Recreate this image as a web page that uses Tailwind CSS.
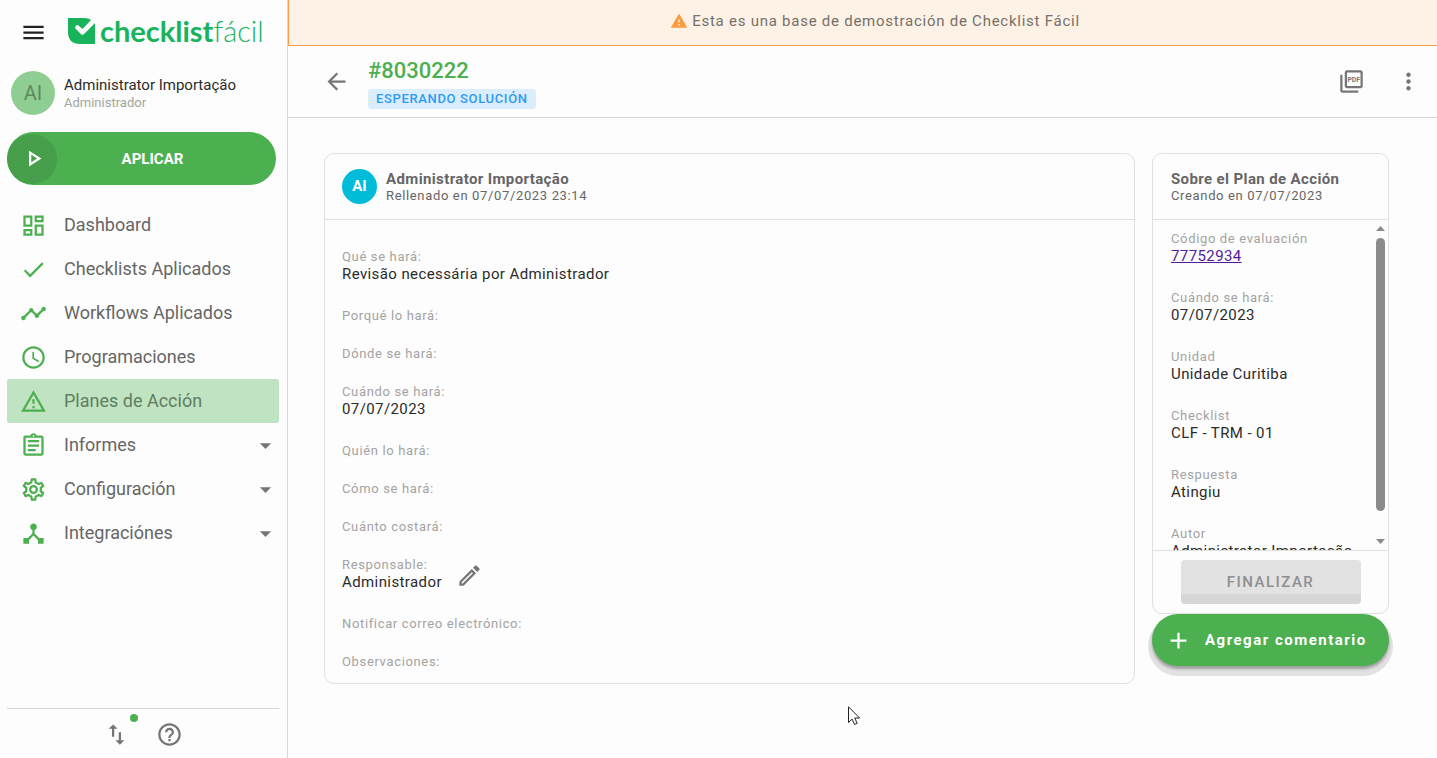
<!DOCTYPE html>
<html lang="es">
<head>
  <meta charset="utf-8">
  <meta name="viewport" content="width=device-width, initial-scale=1.0">
  <title>Plan de Acción #8030222</title>
  <script src="https://cdn.jsdelivr.net/npm/@tailwindcss/browser@4"></script>
</head>
<body class="flex min-h-screen bg-[#fdfdfd] font-[Roboto,'Liberation_Sans',sans-serif] text-[#666]">

  <!-- Sidebar -->
  <aside class="flex w-72 shrink-0 flex-col border-r border-[#d6d6d6] pr-2 pl-[7px]">
    <div class="flex h-16 items-center pl-[13px]">
      <button type="button" aria-label="Menú" class="text-[#222]">
        <svg class="size-[27px]" viewBox="0 0 24 24" fill="currentColor"><path d="M3 18h18v-2H3v2zm0-5h18v-2H3v2zm0-7v2h18V6H3z"/></svg>
      </button>
      <a href="#" class="ml-[21px] flex items-center gap-1 pb-[3px] text-[#18b45b]">
        <svg class="h-[26px] w-7" viewBox="0 0 28 26"><path fill="currentColor" d="M0 0h16q5 0 7 2L14.500 11l-4-3.500q-1.500-1-2.700.200t-.200 2.600l5.400 5.700q1.500 1.500 3 0L27 5v21H12Q0 26 0 14z"/><path fill="none" stroke="#fdfdfd" stroke-width="3" stroke-linecap="round" stroke-linejoin="round" d="M9 10l5.300 5L24 4.500"/></svg>
        <span class="font-[Lato,sans-serif] text-[29px] leading-8 font-light"><b class="font-bold">checklist</b>fácil</span>
      </a>
    </div>

    <div class="flex h-[68px] items-center gap-[9px] pb-[10px] pl-1">
      <div class="flex size-11 items-center justify-center rounded-full bg-[#8fce92] text-xl text-[#5c895e]">AI</div>
      <div>
        <div class="text-[15px] leading-5 text-[#2b2b2b]">Administrator Importação</div>
        <div class="text-[13px] leading-4 text-[#9da89d]">Administrador</div>
      </div>
    </div>

    <button type="button" class="flex h-[53px] w-[269px] items-center overflow-hidden rounded-full bg-[#4caf50] text-[15px] font-bold text-white">
      <span class="flex size-[50px] items-center justify-center rounded-full bg-[#479f4b] pl-0.5">
        <svg class="size-[27px]" viewBox="0 0 24 24" fill="currentColor"><path d="M10 8.640L15.270 12 10 15.360V8.640M8 5v14l11-7L8 5z"/></svg>
      </span>
      <span class="flex-1 pt-px pr-7">APLICAR</span>
    </button>

    <nav class="mt-[18px] text-lg">
      <a href="#" class="flex h-11 items-center gap-[17px] pl-[13px]">
        <svg class="size-[27px] text-[#4caf50]" viewBox="0 0 24 24" fill="currentColor"><path d="M19 5v2h-4V5h4M9 5v6H5V5h4m10 8v6h-4v-6h4M9 17v2H5v-2h4M21 3h-8v6h8V3zM11 3H3v10h8V3zm10 8h-8v10h8V11zm-10 4H3v6h8v-6z"/></svg>
        <span>Dashboard</span>
      </a>
      <a href="#" class="flex h-11 items-center gap-[17px] pl-[13px]">
        <svg class="size-[27px] text-[#4caf50]" viewBox="0 0 24 24" fill="currentColor"><path d="M9 16.170L4.830 12l-1.420 1.410L9 19 21 7l-1.410-1.410z"/></svg>
        <span>Checklists Aplicados</span>
      </a>
      <a href="#" class="flex h-11 items-center gap-[17px] pl-[13px]">
        <svg class="size-[27px] text-[#4caf50]" viewBox="0 0 24 24" fill="currentColor"><path d="M23 8c0 1.100-.9 2-2 2-.18 0-.35-.02-.51-.07l-3.560 3.550c.05.16.07.34.07.52 0 1.100-.9 2-2 2s-2-.9-2-2c0-.18.02-.36.07-.52l-2.550-2.550c-.16.05-.34.07-.52.07s-.36-.02-.52-.07l-4.550 4.560c.05.16.07.33.07.51 0 1.100-.9 2-2 2s-2-.9-2-2 .9-2 2-2c.18 0 .35.02.51.07l4.560-4.550C8.020 9.360 8 9.180 8 9c0-1.100.9-2 2-2s2 .9 2 2c0 .18-.02.36-.07.52l2.550 2.550c.16-.05.34-.07.52-.07s.36.02.52.07l3.550-3.560C19.020 8.350 19 8.180 19 8c0-1.100.9-2 2-2s2 .9 2 2z"/></svg>
        <span>Workflows Aplicados</span>
      </a>
      <a href="#" class="flex h-11 items-center gap-[17px] pl-[13px]">
        <svg class="size-[27px] text-[#4caf50]" viewBox="0 0 24 24" fill="currentColor"><path d="M11.990 2C6.470 2 2 6.480 2 12s4.470 10 9.990 10C17.520 22 22 17.520 22 12S17.520 2 11.990 2zM12 20c-4.420 0-8-3.580-8-8s3.580-8 8-8 8 3.580 8 8-3.580 8-8 8zm.5-13H11v6l5.250 3.150.75-1.230-4.500-2.670z"/></svg>
        <span>Programaciones</span>
      </a>
      <a href="#" class="flex h-11 items-center gap-[17px] rounded-xs bg-[#c0e4c2] pl-[13px] text-[#5f7d61]">
        <svg class="size-[27px] text-[#4caf50]" viewBox="0 0 24 24" fill="currentColor"><path d="M12 5.990L19.530 19H4.470L12 5.990M12 2L1 21h22L12 2zm1 14h-2v2h2v-2zm0-6h-2v4h2v-4z"/></svg>
        <span>Planes de Acción</span>
      </a>
      <a href="#" class="flex h-11 items-center gap-[17px] pl-[13px]">
        <svg class="size-[27px] text-[#4caf50]" viewBox="0 0 24 24" fill="currentColor"><path d="M7 15h7v2H7zm0-4h10v2H7zm0-4h10v2H7zm12-4h-4.180C14.400 1.840 13.300 1 12 1c-1.300 0-2.400.84-2.820 2H5c-.14 0-.27.01-.4.04-.39.08-.74.28-1.010.55-.18.18-.33.4-.43.64-.1.23-.16.49-.16.77v14c0 .27.06.54.16.78s.25.45.43.64c.27.27.62.47 1.010.55.13.02.26.03.4.03h14c1.100 0 2-.9 2-2V5c0-1.100-.9-2-2-2zm-7-.25c.41 0 .75.34.75.75s-.34.75-.75.75-.75-.34-.75-.75.34-.75.75-.75zM19 19H5V5h14v14z"/></svg>
        <span class="flex-1">Informes</span>
        <svg class="size-[27px] text-[#757575]" viewBox="0 0 24 24" fill="currentColor"><path d="M7 10l5 5 5-5z"/></svg>
      </a>
      <a href="#" class="flex h-11 items-center gap-[17px] pl-[13px]">
        <svg class="size-[27px] text-[#4caf50]" viewBox="0 0 24 24" fill="currentColor"><path d="M19.430 12.980c.04-.32.07-.64.07-.98 0-.34-.03-.66-.07-.98l2.110-1.650c.19-.15.24-.42.12-.64l-2-3.460c-.09-.16-.26-.25-.44-.25-.06 0-.12.01-.17.03l-2.490 1c-.52-.4-1.080-.73-1.690-.98l-.38-2.650C14.460 2.180 14.250 2 14 2h-4c-.25 0-.46.18-.49.42l-.38 2.650c-.61.25-1.170.59-1.690.98l-2.490-1c-.06-.02-.12-.03-.18-.03-.17 0-.34.09-.43.25l-2 3.460c-.13.22-.07.49.12.64l2.110 1.650c-.04.32-.07.65-.07.98 0 .33.03.66.07.98l-2.110 1.650c-.19.15-.24.42-.12.64l2 3.460c.09.16.26.25.44.25.06 0 .12-.01.17-.03l2.490-1c.52.4 1.080.73 1.690.98l.38 2.650c.03.24.24.42.49.42h4c.25 0 .46-.18.49-.42l.38-2.650c.61-.25 1.170-.59 1.690-.98l2.490 1c.06.02.12.03.18.03.17 0 .34-.09.43-.25l2-3.460c.12-.22.07-.49-.12-.64l-2.110-1.650zm-1.980-1.710c.04.31.05.52.05.73 0 .21-.02.43-.05.73l-.14 1.130.89.7 1.080.84-.7 1.210-1.270-.51-1.040-.42-.9.68c-.43.32-.84.56-1.250.73l-1.060.43-.16 1.130-.2 1.350h-1.400l-.19-1.350-.16-1.130-1.060-.43c-.43-.18-.83-.41-1.230-.71l-.91-.7-1.060.43-1.270.51-.7-1.210 1.080-.84.89-.7-.14-1.130c-.03-.31-.05-.54-.05-.74s.02-.43.05-.73l.14-1.130-.89-.7-1.080-.84.7-1.210 1.270.51 1.040.42.9-.68c.43-.32.84-.56 1.250-.73l1.060-.43.16-1.130.2-1.350h1.390l.19 1.350.16 1.130 1.060.43c.43.18.83.41 1.230.71l.91.7 1.060-.43 1.270-.51.7 1.210-1.070.85-.89.7.14 1.130zM12 8c-2.210 0-4 1.790-4 4s1.790 4 4 4 4-1.790 4-4-1.790-4-4-4zm0 6c-1.100 0-2-.9-2-2s.9-2 2-2 2 .9 2 2-.9 2-2 2z"/></svg>
        <span class="flex-1">Configuración</span>
        <svg class="size-[27px] text-[#757575]" viewBox="0 0 24 24" fill="currentColor"><path d="M7 10l5 5 5-5z"/></svg>
      </a>
      <a href="#" class="flex h-11 items-center gap-[17px] pl-[13px]">
        <svg class="size-[27px] text-[#4caf50]" viewBox="0 0 24 24" fill="currentColor"><path d="M17 16l-4-4V8.820C14.160 8.400 15 7.300 15 6c0-1.660-1.340-3-3-3S9 4.340 9 6c0 1.300.84 2.400 2 2.820V12l-4 4H3v5h5v-3.050l4-4.200 4 4.200V21h5v-5h-4z"/></svg>
        <span class="flex-1">Integraciónes</span>
        <svg class="size-[27px] text-[#757575]" viewBox="0 0 24 24" fill="currentColor"><path d="M7 10l5 5 5-5z"/></svg>
      </a>
    </nav>

    <div class="mt-auto flex h-[50px] items-center justify-center gap-[26px] border-t border-[#d6d6d6] pt-px text-[#757575]">
      <button type="button" aria-label="Sincronizar" class="relative">
        <svg class="size-[27px]" viewBox="0 0 24 24" fill="currentColor"><path d="M16 17.010V10h-2v7.010h-3L15 21l4-3.990h-3zM9 3L5 6.990h3V14h2V6.990h3L9 3z"/></svg>
        <span class="absolute -top-[7px] -right-2 size-2 rounded-full bg-[#4caf50]"></span>
      </button>
      <button type="button" aria-label="Ayuda">
        <svg class="size-[27px]" viewBox="0 0 24 24" fill="currentColor"><path d="M11 18h2v-2h-2v2zm1-16C6.480 2 2 6.480 2 12s4.480 10 10 10 10-4.480 10-10S17.520 2 12 2zm0 18c-4.410 0-8-3.590-8-8s3.590-8 8-8 8 3.590 8 8-3.590 8-8 8zm0-14c-2.210 0-4 1.790-4 4h2c0-1.100.9-2 2-2s2 .9 2 2c0 2-3 1.750-3 5h2c0-2.250 3-2.500 3-5 0-2.210-1.790-4-4-4z"/></svg>
      </button>
    </div>
  </aside>

  <div class="min-w-0 flex-1">
    <!-- Demo banner -->
    <div class="flex h-[46px] items-center justify-center gap-1 border-b border-l border-[#fd9a47] bg-[#fef2e7] pb-[3px] pl-6 text-[15px] tracking-wider text-[#757069]">
      <svg class="size-[18px] text-[#fd9a3c]" viewBox="0 0 24 24" fill="currentColor"><path d="M1 21h22L12 2 1 21zm12-3h-2v-2h2v2zm0-4h-2v-4h2v4z"/></svg>
      <span>Esta es una base de demostración de Checklist Fácil</span>
    </div>

    <header class="flex h-[72px] items-center border-b border-[#d6d6d6] pr-[15px] pl-[35px] text-[#757575]">
      <button type="button" aria-label="Volver">
        <svg class="size-[27px]" viewBox="0 0 24 24" fill="currentColor"><path d="M20 11H7.830l5.590-5.590L12 4l-8 8 8 8 1.410-1.410L7.830 13H20v-2z"/></svg>
      </button>
      <div class="ml-[18px] flex flex-1 flex-col items-start gap-1 pt-[3px]">
        <h1 class="text-[22px] leading-7 font-medium text-[#4caf50]">#8030222</h1>
        <span class="rounded-sm bg-[#d9edfd] px-2 text-[13px] leading-5 font-medium tracking-wider text-[#2f9bf3]">ESPERANDO SOLUCIÓN</span>
      </div>
      <button type="button" aria-label="Exportar PDF">
        <svg class="size-[27px]" viewBox="0 0 24 24" fill="currentColor"><path d="M20 2H8c-1.100 0-2 .9-2 2v12c0 1.100.9 2 2 2h12c1.100 0 2-.9 2-2V4c0-1.100-.9-2-2-2zm0 14H8V4h12v12zM4 6H2v14c0 1.100.9 2 2 2h14v-2H4V6z"/><text x="14" y="12.500" font-size="6" font-weight="700" text-anchor="middle">PDF</text></svg>
      </button>
      <button type="button" aria-label="Más opciones" class="ml-[30px]">
        <svg class="size-[27px]" viewBox="0 0 24 24" fill="currentColor"><path d="M12 8c1.100 0 2-.9 2-2s-.9-2-2-2-2 .9-2 2 .9 2 2 2zm0 2c-1.100 0-2 .9-2 2s.9 2 2 2 2-.9 2-2-.9-2-2-2zm0 6c-1.100 0-2 .9-2 2s.9 2 2 2 2-.9 2-2-.9-2-2-2z"/></svg>
      </button>
    </header>

    <main class="flex items-start gap-[17px] pt-[35px] pr-12 pl-9">
      <!-- Plan detail -->
      <section class="min-w-0 flex-1 rounded-[10px] border border-[#e0e0e0]">
        <div class="flex h-[66px] items-center gap-[9px] border-b border-[#e0e0e0] px-[17px]">
          <div class="flex size-[35px] items-center justify-center rounded-full bg-[#00bcd8] text-[15px] font-bold text-white">AI</div>
          <div>
            <h2 class="text-[15px] leading-[18px] font-bold tracking-wide">Administrator Importação</h2>
            <p class="text-[13px] leading-4 tracking-wider">Rellenado en 07/07/2023 23:14</p>
          </div>
        </div>
        <dl class="flex flex-col gap-5 px-[17px] pt-7 pb-3 tracking-wide">
          <div>
            <dt class="text-[13px] leading-[18px] tracking-wider text-[#a3a3a3]">Qué se hará:</dt>
            <dd class="pb-1 text-[15px] leading-[17px] text-[#2b2b2b]">Revisão necessária por Administrador</dd>
          </div>
          <div>
            <dt class="text-[13px] leading-[18px] tracking-wider text-[#a3a3a3]">Porqué lo hará:</dt>
          </div>
          <div>
            <dt class="text-[13px] leading-[18px] tracking-wider text-[#a3a3a3]">Dónde se hará:</dt>
          </div>
          <div>
            <dt class="text-[13px] leading-[18px] tracking-wider text-[#a3a3a3]">Cuándo se hará:</dt>
            <dd class="pb-1 text-[15px] leading-[17px] text-[#2b2b2b]">07/07/2023</dd>
          </div>
          <div>
            <dt class="text-[13px] leading-[18px] tracking-wider text-[#a3a3a3]">Quién lo hará:</dt>
          </div>
          <div>
            <dt class="text-[13px] leading-[18px] tracking-wider text-[#a3a3a3]">Cómo se hará:</dt>
          </div>
          <div>
            <dt class="text-[13px] leading-[18px] tracking-wider text-[#a3a3a3]">Cuánto costará:</dt>
          </div>
          <div class="flex items-center gap-[14px]">
            <div>
              <dt class="text-[13px] leading-[18px] tracking-wider text-[#a3a3a3]">Responsable:</dt>
              <dd class="pb-1 text-[15px] leading-[17px] text-[#2b2b2b]">Administrador</dd>
            </div>
            <button type="button" aria-label="Editar responsable" class="text-[#757575]">
              <svg class="size-[27px]" viewBox="0 0 24 24" fill="currentColor"><path d="M14.060 9.020l.92.92L5.920 19H5v-.92l9.060-9.060M17.660 3c-.25 0-.51.1-.7.29l-1.830 1.830 3.750 3.750 1.830-1.830c.39-.39.39-1.020 0-1.410l-2.340-2.340c-.2-.2-.45-.29-.71-.29zm-3.600 3.190L3 17.250V21h3.750L17.810 9.940l-3.750-3.750z"/></svg>
            </button>
          </div>
          <div>
            <dt class="text-[13px] leading-[18px] tracking-wider text-[#a3a3a3]">Notificar correo electrónico:</dt>
          </div>
          <div>
            <dt class="text-[13px] leading-[18px] tracking-wider text-[#a3a3a3]">Observaciones:</dt>
          </div>
        </dl>
      </section>

      <!-- About the plan -->
      <div class="w-[237px] shrink-0">
        <section class="rounded-[10px] border border-[#e0e0e0]">
          <div class="flex h-[66px] flex-col justify-center border-b border-[#e0e0e0] px-[18px]">
            <h2 class="text-[15px] leading-[18px] font-bold tracking-wide">Sobre el Plan de Acción</h2>
            <p class="text-[13px] leading-4 tracking-wider">Creando en 07/07/2023</p>
          </div>
          <div class="relative h-[330px] overflow-hidden">
            <dl class="flex flex-col gap-5 px-[18px] pt-[10px] tracking-wide">
              <div>
                <dt class="text-[13px] leading-[18px] tracking-wider text-[#a3a3a3]">Código de evaluación</dt>
                <dd class="pb-1 text-[15px] leading-[17px]"><a href="#" class="text-[#551a9b] underline">77752934</a></dd>
              </div>
              <div>
                <dt class="text-[13px] leading-[18px] tracking-wider text-[#a3a3a3]">Cuándo se hará:</dt>
                <dd class="pb-1 text-[15px] leading-[17px] text-[#2b2b2b]">07/07/2023</dd>
              </div>
              <div>
                <dt class="text-[13px] leading-[18px] tracking-wider text-[#a3a3a3]">Unidad</dt>
                <dd class="pb-1 text-[15px] leading-[17px] text-[#2b2b2b]">Unidade Curitiba</dd>
              </div>
              <div>
                <dt class="text-[13px] leading-[18px] tracking-wider text-[#a3a3a3]">Checklist</dt>
                <dd class="pb-1 text-[15px] leading-[17px] text-[#2b2b2b]">CLF - TRM - 01</dd>
              </div>
              <div>
                <dt class="text-[13px] leading-[18px] tracking-wider text-[#a3a3a3]">Respuesta</dt>
                <dd class="pb-1 text-[15px] leading-[17px] text-[#2b2b2b]">Atingiu</dd>
              </div>
              <div>
                <dt class="text-[13px] leading-[18px] tracking-wider text-[#a3a3a3]">Autor</dt>
                <dd class="pb-1 text-[15px] leading-[17px] text-[#2b2b2b]">Administrator Importação</dd>
              </div>
            </dl>
            <!-- scrollbar -->
            <div class="absolute inset-y-0 right-[3px] flex w-[9px] flex-col items-center pt-1.5 pb-1.5 text-[#8b8b8b]">
              <svg class="h-[5px] w-[9px]" viewBox="0 0 9 5" fill="currentColor"><path d="M0 5l4.500-5L9 5z"/></svg>
              <div class="mt-[7px] h-[273px] w-[9px] rounded-full bg-[#8b8b8b]"></div>
              <svg class="mt-auto h-[5px] w-[9px]" viewBox="0 0 9 5" fill="currentColor"><path d="M0 0l4.500 5L9 0z"/></svg>
            </div>
          </div>
          <div class="flex h-[63px] items-center justify-center border-t border-[#e0e0e0]">
            <button type="button" disabled class="h-11 w-[180px] rounded-sm border-b-10 border-[#d6d6d6] bg-[#e2e2e2] pt-[10px] text-[15px] leading-5 font-medium tracking-widest text-[#8f8f8f]">FINALIZAR</button>
          </div>
        </section>
        <button type="button" class="flex h-[52px] w-full items-center gap-[13px] rounded-full bg-[#4caf50] pl-[13px] text-[15px] font-bold tracking-widest text-white shadow-[0_3px_3px_rgba(0,0,0,0.3),0_6px_0_4px_#e2e2e2]">
          <svg class="size-[27px]" viewBox="0 0 24 24" fill="currentColor"><path d="M19 13h-6v6h-2v-6H5v-2h6V5h2v6h6v2z"/></svg>
          <span>Agregar comentario</span>
        </button>
      </div>
    </main>
  </div>

  <!-- Mouse pointer -->
  <svg class="pointer-events-none absolute top-[706px] left-[848px] h-5 w-3" viewBox="0 0 12 20"><path fill="#fff" stroke="#222" d="M.5.800v15.700l3.600-3.400 2.500 5.400 2.600-1.200-2.500-5.300h4.900z"/></svg>
</body>
</html>
